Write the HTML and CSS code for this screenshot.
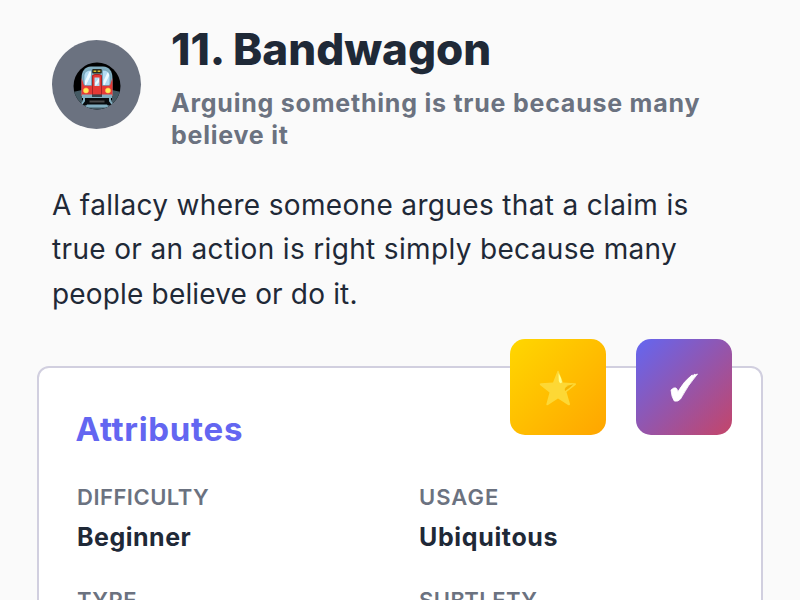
FILE: index.html
```html
<!DOCTYPE html>
<html lang="en">
<head>
<meta charset="utf-8">
<title>Bandwagon</title>
<link rel="stylesheet" href="styles.css">
</head>
<body>
<main class="page">
  <header class="header">
    <div class="avatar">
      <svg class="train" viewBox="0 0 48 48" aria-hidden="true">
        <defs><clipPath id="tunnel"><circle cx="24" cy="24" r="23.5"/></clipPath></defs>
        <g clip-path="url(#tunnel)">
          <rect width="48" height="48" fill="#000"/>
          <path d="M0 30L9 28V38H39V28L48 30V48H0Z" fill="#455a64"/>
          <path d="M10 34H38V43H10Z" fill="#080b0d"/>
          <path d="M8.500 34V17Q8.500 5 18 4.500H30Q39.500 5 39.500 17V34Z" fill="#82aec0"/>
          <path d="M8.500 16L11 23H19V13H29V23H37L39.500 16V34H8.500Z" fill="#e53935"/>
          <path d="M19.500 33V15Q19.500 12.500 22 12.500H26Q28.500 12.500 28.500 15V33Z" fill="#e53935" stroke="#a52525"/>
          <path d="M11 22V13Q12 8 18.500 8V23.500H12.500Q11 23.500 11 22ZM29.500 8Q36 8 37 13V22Q37 23.500 35.500 23.500H29.500Z" fill="#b3dcf3" stroke="#5e8ca3" stroke-width=".6"/>
          <path d="M21.500 15.500H26.500V24H21.500Z" fill="#b3dcf3"/>
          <path d="M12 19L16.500 9.500H18V13L13 23H12ZM30.500 19L34.500 10.500L36 12V14L31.500 23H30.500ZM22 21L26 16V20L22.500 24Z" fill="#eefaff"/>
          <rect x="19.200" y="7" width="9.600" height="4.500" rx="1" fill="#29291c"/>
          <path d="M20.500 9.200H23.300M24.600 9.200H27.300" stroke="#d9bd2c" stroke-width="1.500"/>
          <circle cx="13" cy="28.500" r="2.600" fill="#ffee58" stroke="#ffb74d" stroke-width=".6"/>
          <circle cx="35" cy="28.500" r="2.600" fill="#ffee58" stroke="#ffb74d" stroke-width=".6"/>
          <path d="M9 32.500H19V34H29V32.500H39V36H9Z" fill="#82aec0"/>
          <rect x="19" y="32.500" width="10" height="2.500" fill="#37474f"/>
          <path d="M16.500 39.500H31.500" stroke="#4b4b4b" stroke-width="2"/>
          <path d="M11 36V39L8 43M37 36V39L40 43" fill="none" stroke="#82aec0" stroke-width="2"/>
          <path d="M14 42.500H34L36 45.500H12Z" fill="#82aec0"/>
        </g>
      </svg>
    </div>
    <div class="heading">
      <h1 class="title">11. Bandwagon</h1>
      <p class="subtitle">Arguing something is true because many<br>believe it</p>
    </div>
  </header>
  <p class="description">A fallacy where someone argues that a claim is<br>true or an action is right simply because many<br><span class="closing">people believe or do it.</span></p>
  <section class="card">
    <div class="badges">
      <div class="badge badge-star">
        <svg class="star" viewBox="0 0 38 36" aria-hidden="true">
          <path d="M18.500 1Q19.500 0 20 2L24 12.500L36 13.300Q38 13.700 36.500 15L27.500 22L31 34Q31 36 29 35L19 28.500L9 35Q7 36 7.400 34L10.500 22.500L1 15Q0 13.500 2 13.300L14 12.500Z" fill="#fdd835"/>
          <path d="M19.500 3Q22.500 8 23 12Q21.500 15 19.800 11Z" fill="#ffff8d"/>
          <path d="M34.500 14.300Q31 18 26 21Q25 19 27 17Q30 15 34.500 14.300Z" fill="#f4b400"/>
        </svg>
      </div>
      <div class="badge badge-check">
        <svg class="check" viewBox="0 0 28 30" aria-hidden="true">
          <path d="M1 17Q4 14 6 15Q7.500 16 7.700 19Q14 8 22 2L23 2.500L25 1L24.800 2L27.500 1Q18 12 10.500 26Q8 29 4.300 28Q1.500 24 1 17Z" fill="#fff" stroke="#fff" stroke-width=".8"/>
        </svg>
      </div>
    </div>
    <h2 class="card-title">Attributes</h2>
    <dl class="attributes">
      <div><dt class="label">DIFFICULTY</dt><dd class="value">Beginner</dd></div>
      <div><dt class="label usage">USAGE</dt><dd class="value wide">Ubiquitous</dd></div>
      <div><dt class="label">TYPE</dt></div>
      <div><dt class="label">SUBTLETY</dt></div>
    </dl>
  </section>
</main>
</body>
</html>
```
FILE: styles.css
```css
* { box-sizing: border-box; }
html { overflow: hidden; }
body {
  margin: 0;
  height: 600px;
  overflow: hidden;
  background: #fafafa;
  color: #1f2937;
  font-family: "Inter", "Liberation Sans", sans-serif;
}
h1, h2, p, dl, dd { margin: 0; }
.page { height: 600px; padding: 22px 37px 0; overflow: hidden; }
.header { display: flex; gap: 30px; padding-left: 15px; }
.avatar {
  display: flex;
  align-items: center;
  justify-content: center;
  flex: none;
  width: 89px;
  height: 89px;
  margin-top: 18px;
  border-radius: 50%;
  background: #6b7280;
}
.train { width: 48px; height: 48px; margin-top: 3px; }
.title { font-size: 44px; line-height: 54px; font-weight: 800; white-space: nowrap; }
.subtitle {
  margin-top: 11px;
  color: #6b7280;
  font-size: 25px;
  line-height: 32px;
  font-weight: 700;
  letter-spacing: 0.77px;
  white-space: nowrap;
}
.description {
  margin: 31.500px 0 49.500px;
  padding-left: 15px;
  font-size: 28px;
  line-height: 44.500px;
  letter-spacing: 0.34px;
  white-space: nowrap;
}
.closing { letter-spacing: 0.17px; }
.card {
  position: relative;
  width: 726px;
  height: 400px;
  padding: 41px 38px 0;
  border: 2px solid #d1cfdf;
  border-radius: 12px;
  background: #fff;
}
.badges { position: absolute; top: -29px; right: 29px; display: flex; gap: 30px; }
.badge {
  display: flex;
  align-items: center;
  justify-content: center;
  width: 96px;
  height: 96px;
  border-radius: 15px;
}
.badge-star { background: linear-gradient(135deg, #ffd700, #ffa500); }
.badge-check { background: linear-gradient(135deg, #6366f1, #c44569); }
.star { width: 38px; height: 36px; margin-top: 3px; }
.check { width: 28px; height: 30px; margin-top: 3px; }
.card-title {
  margin-left: -1.500px;
  color: #6366f1;
  font-size: 33px;
  line-height: 40px;
  font-weight: 700;
  letter-spacing: 0.7px;
}
.attributes {
  display: grid;
  grid-template-columns: 1fr 1fr;
  column-gap: 38px;
  row-gap: 33px;
  margin-top: 34px;
}
.label { color: #6b7280; font-size: 22px; line-height: 28px; font-weight: 600; letter-spacing: 0.5px; }
.usage { letter-spacing: 1px; }
.value { margin-top: 10px; font-size: 25px; line-height: 32px; font-weight: 700; letter-spacing: 0.5px; }
.wide { letter-spacing: 0.65px; }
```
